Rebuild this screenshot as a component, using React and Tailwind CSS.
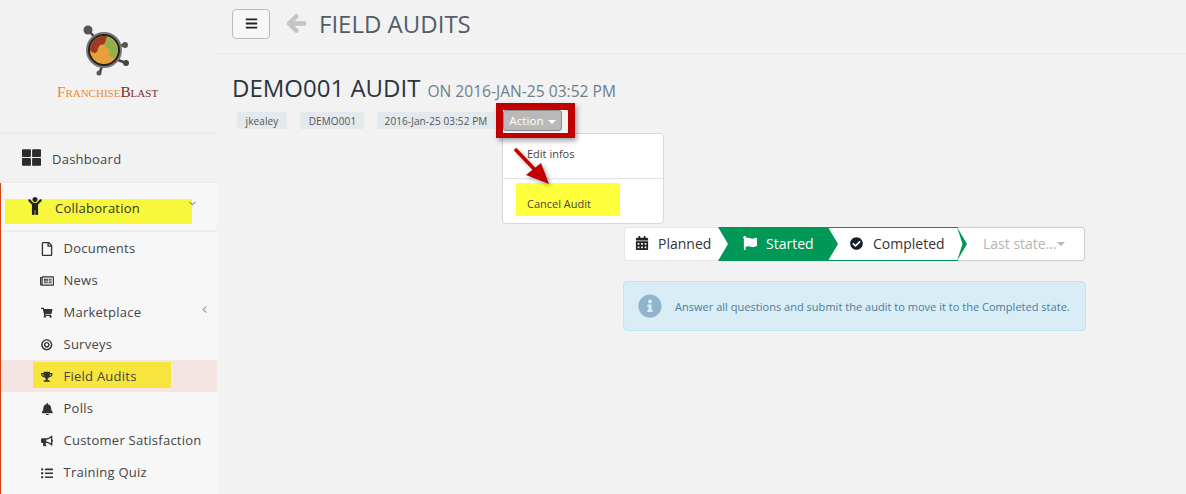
import React from 'react';
import {
  FaThLarge, FaChild, FaRegFile, FaRegNewspaper, FaShoppingCart, FaBullseye, FaTrophy, FaBell,
  FaBullhorn, FaListUl, FaBars, FaArrowLeft, FaCalendarAlt, FaFlag, FaCheckCircle, FaInfoCircle,
} from 'react-icons/fa';
import { ChevronDown, ChevronLeft } from 'lucide-react';

const SUB_ITEMS = [
  { label: 'Documents', icon: FaRegFile, size: 'text-[14px]' },
  { label: 'News', icon: FaRegNewspaper, size: 'text-[14px]' },
  { label: 'Marketplace', icon: FaShoppingCart, size: 'text-[11.5px]', chevron: true },
  { label: 'Surveys', icon: FaBullseye, size: 'text-[11.5px]' },
  { label: 'Field Audits', icon: FaTrophy, size: 'text-[11.5px]', active: true },
  { label: 'Polls', icon: FaBell, size: 'text-[12.5px]' },
  { label: 'Customer Satisfaction', icon: FaBullhorn, size: 'text-[12px]' },
  { label: 'Training Quiz', icon: FaListUl, size: 'text-[12.5px]' },
];

function Logo() {
  return (
    <svg width="60" height="62" viewBox="0 0 60 62" className="mt-[24px]">
      <g stroke="#444" strokeWidth="2.5">
        <line x1="10" y1="7" x2="20" y2="18" />
        <line x1="39" y1="22" x2="46" y2="21" />
        <line x1="39" y1="36" x2="47" y2="39" />
        <line x1="23" y1="42" x2="21" y2="48" />
      </g>
      <circle cx="9" cy="6" r="4.500" fill="#555" />
      <circle cx="46" cy="21" r="3" fill="#555" />
      <circle cx="47" cy="39" r="3" fill="#444" />
      <circle cx="20" cy="49" r="2.500" fill="#555" />
      <circle cx="25" cy="26" r="18" fill="#777" />
      <circle cx="25" cy="26" r="16" fill="#222" />
      <circle cx="25" cy="26" r="14" fill="#e8a13a" />
      <path d="M11 26a14 14 0 0 1 18-13.400c-3 2-1 5-3 7s-4 0-6 3-1 4-2 5.500-5 1-7-2.100z" fill="#9c3a25" />
      <path d="M29 12.600a14 14 0 0 1 6 22c-2-2-4-1-5-3s2-4 0-6-3-1-4-3 1-8 3-10z" fill="#8fb04e" />
    </svg>
  );
}

function SidebarItem({ item }) {
  const Icon = item.icon;
  return (
    <div className={`relative flex h-8 items-center pl-[39px] pt-[2px] text-[13px] font-medium tracking-[0.25px] text-[#444] ${item.active ? 'bg-[#f5e5e2]' : ''}`}>
      {item.active && <div className="absolute left-[32px] top-[2px] h-[26px] w-[138px] bg-[#f7e43c]" />}
      <span className="relative z-10 flex w-[14px] justify-center">
        <Icon className={`${item.size} text-[#333]`} />
      </span>
      <span className="relative z-10 ml-[9.5px]">{item.label}</span>
      {item.chevron && <ChevronLeft className="absolute right-[7px] top-[8px] size-[11px] text-[#555]" />}
    </div>
  );
}

function Sidebar() {
  return (
    <aside className="h-full w-[217px] shrink-0">
      <div className="flex h-[134px] flex-col items-center border-b-2 border-[#ececec]">
        <Logo />
        <div className="mr-[2px] mt-[-2px] text-[15.3px] leading-[16px] [font-family:'Liberation_Serif',serif] [font-variant:small-caps]">
          <span className="text-[#e88a35]">Franchise</span>
          <span className="text-[#7d2b2b]">Blast</span>
        </div>
      </div>
      <div className="flex h-[49px] items-center border-b-2 border-[#ececec] pl-[22px] text-[13px] font-medium tracking-[0.25px] text-[#444]">
        <FaThLarge className="text-[19px] text-[#2b2b2b]" />
        <span className="ml-[11px] mt-[4px]">Dashboard</span>
      </div>
      <div className="h-[311px] border-l-[1.5px] border-[#d9410f] bg-[#f7f7f7]">
        <div className="relative flex h-[49px] items-center border-b-2 border-[#ececec] pl-[25px] text-[13px] font-medium tracking-[0.25px] text-[#333]">
          <div className="absolute left-[4px] top-[16px] h-[25px] w-[187px] bg-[#f7f73c]" />
          <FaChild className="relative z-10 mt-[-1px] text-[18px] text-[#222]" />
          <span className="relative z-10 ml-[11px] mt-[4px]">Collaboration</span>
          <ChevronDown className="absolute right-[19px] top-[15px] size-[11px] text-[#555]" />
        </div>
        {SUB_ITEMS.map(item => <SidebarItem key={item.label} item={item} />)}
      </div>
    </aside>
  );
}

function TitleBlock() {
  return (
    <>
      <div className="flex items-baseline">
        <h1 className="text-[24px] leading-[32px] text-[#2d3440]">DEMO001 AUDIT</h1>
        <span className="ml-[7px] text-[15.6px] text-[#6f7f8d]">ON 2016-JAN-25 03:52 PM</span>
      </div>
      <div className="relative mt-[6px] flex items-center pl-[5px] text-[10px] tracking-[0.1px] text-[#555]">
        <span className="flex h-[17px] w-[50px] items-center justify-center rounded-[2px] bg-[#e3e9ed] pt-[1px]">jkealey</span>
        <span className="ml-[13px] flex h-[17px] w-[64px] items-center justify-center rounded-[2px] bg-[#e3e9ed] pl-[1px] pt-[1px]">DEMO001</span>
        <span className="ml-[13px] flex h-[17px] w-[118px] items-center justify-center rounded-[2px] bg-[#e3e9ed] pt-[1px]">2016-Jan-25 03:52 PM</span>
        <button className="ml-[8px] flex h-[21px] w-[59px] items-center justify-center gap-[4px] rounded-[3px] border border-[#8d8d8d] bg-[#b9b9b9] text-[11.5px] text-white">
          Action
          <span className="mt-[2px] border-x-[4px] border-t-[4px] border-x-transparent border-t-white" />
        </button>
        {/* red annotation box, sits over the dropdown */}
        <div className="absolute left-[264px] top-[-7px] z-30 h-[35px] w-[79px] border-[7px] border-b-[5px] border-[#c00000] shadow-[2px_3px_5px_rgba(0,0,0,0.35)]" />
      </div>
    </>
  );
}

function Dropdown() {
  return (
    <div className="absolute left-[285px] top-[133px] z-20 h-[91px] w-[162px] rounded-[4px] border border-[#d8d8d8] bg-white text-[11px] text-[#444]">
      <div className="flex h-[44px] items-start pl-[24px] pt-[12px]">Edit infos</div>
      <div className="border-t border-[#dfe3e6]" />
      <div className="relative mt-[4px] ml-[13px] flex h-[33px] w-[104px] items-center bg-[#ffff3c] pl-[11px] pt-[9px]">Cancel Audit</div>
      <svg width="50" height="50" viewBox="0 0 50 50" className="absolute left-[8px] top-[12px] drop-shadow-[2px_2px_2px_rgba(0,0,0,0.35)]">
        <line x1="4" y1="3" x2="27" y2="27" stroke="#c00000" strokeWidth="3.5" />
        <polygon points="15,29 30,17 38,38" fill="#c00000" />
      </svg>
    </div>
  );
}

function Stepper() {
  return (
    <div className="ml-[407px] mt-[96px] flex h-[34px] w-[461px] text-[14px] text-[#333]">
      <div className="mr-[-10px] flex w-[104px] items-center rounded-l-[3px] border border-r-0 border-[#e6e6e6] bg-white pb-[2px] pl-[10px]">
        <FaCalendarAlt className="text-[14px] text-[#222]" />
        <span className="ml-[9px]">Planned</span>
      </div>
      <div className="relative z-10 flex w-[120px] items-center bg-[#009856] pb-[2px] pl-[25px] text-white [clip-path:polygon(0_0,110px_0,100%_50%,110px_100%,0_100%,10px_50%)]">
        <FaFlag className="text-[14px]" />
        <span className="ml-[9px]">Started</span>
      </div>
      <div className="relative ml-[-10px] flex w-[130px] items-center border-y border-[#009856] bg-white pb-[2px] pl-[22px]">
        <FaCheckCircle className="text-[13px] text-[#14202c]" />
        <span className="ml-[10px]">Completed</span>
        <svg width="11" height="34" viewBox="0 0 11 34" className="absolute left-[129px] top-[-1px] z-10">
          <polygon points="0,0 10,17 0,34 5.500,17" fill="#009856" />
        </svg>
      </div>
      <div className="flex flex-1 items-center rounded-r-[3px] border border-l-0 border-[#cfcfcf] bg-white pb-[2px] pl-[25px] text-[#b5b5b5]">
        Last state...
        <span className="mt-[2px] border-x-[4px] border-t-[4px] border-x-transparent border-t-[#b5b5b5]" />
      </div>
    </div>
  );
}

export default function App() {
  return (
    <div className="flex h-[494px] w-[1186px] overflow-hidden bg-[#f2f2f2] [font-family:'Open_Sans',sans-serif]">
      <Sidebar />
      <main className="relative flex-1">
        <header className="flex h-[54px] items-center border-b border-[#e8e8e8] pb-[6px] pl-[15px]">
          <button className="flex h-[30px] w-[38px] items-center justify-center rounded-[4px] border border-[#bbb] bg-[#f7f7f7]">
            <FaBars className="text-[13px] text-[#222]" />
          </button>
          <FaArrowLeft className="ml-[16px] text-[21px] text-[#c4c4c4]" stroke="currentColor" strokeWidth="30" />
          <h2 className="ml-[12px] text-[24px] text-[#535d69]">FIELD AUDITS</h2>
        </header>
        <div className="pl-[15px] pt-[18px]">
          <TitleBlock />
        </div>
        <Dropdown />
        <Stepper />
        <div className="ml-[406px] mt-[20px] flex h-[50px] w-[463px] items-center rounded-[4px] border border-[#bce8f1] bg-[#d9edf7] pl-[14px] text-[11.06px] text-[#4f7b9b]">
          <FaInfoCircle className="text-[24px] text-[#8fb4cc]" />
          <span className="ml-[13px] mt-[2px]">Answer all questions and submit the audit to move it to the Completed state.</span>
        </div>
      </main>
    </div>
  );
}
